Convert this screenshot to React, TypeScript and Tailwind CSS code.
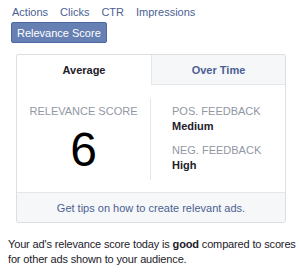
export default function App() {
  return (
    <div className="w-[300px] h-[276px] bg-white text-[11px] leading-[14px] text-[#333]" style={{ fontFamily: '"Liberation Sans", Arial, sans-serif' }}>
      <div className="pt-[5px] pl-[12px] flex gap-[12px] text-[#4b5f93]">
        <span>Actions</span>
        <span>Clicks</span>
        <span>CTR</span>
        <span>Impressions</span>
      </div>
      <div className="pl-[11px] mt-[3px] flex">
        <div className="h-[21px] px-[5px] flex items-center rounded-[2px] bg-[#6680b3] border border-[#4e69a2] text-white text-[11px]">
          Relevance Score
        </div>
      </div>
      <div className="ml-[16px] mt-[11px] w-[270px] border border-[#dddfe2] rounded-[2px]">
        <div className="flex h-[30px]">
          <div className="w-[134px] flex items-center justify-center font-bold text-[#1d2129]">Average</div>
          <div className="flex-1 flex items-center justify-center font-bold text-[#4b5f93] bg-[#f6f7f9] border-l border-b border-[#e5e6e9]">Over Time</div>
        </div>
        <div className="flex h-[107px] pt-[13px]">
          <div className="w-[134px] flex flex-col items-center border-r border-[#e5e6e9] h-[82px]">
            <div className="text-[#9197a3] mt-[6px]">RELEVANCE SCORE</div>
            <div className="text-[48px] leading-[48px] text-black mt-[8px]">6</div>
          </div>
          <div className="pl-[21px] pt-[6px] flex flex-col">
            <div className="text-[#9197a3]">POS. FEEDBACK</div>
            <div className="font-bold text-[#1d2129] mt-[1px]">Medium</div>
            <div className="text-[#9197a3] mt-[10px]">NEG. FEEDBACK</div>
            <div className="font-bold text-[#1d2129] mt-[1px]">High</div>
          </div>
        </div>
        <div className="h-[30px] bg-[#f6f7f9] border-t border-[#e5e6e9] flex items-center justify-center text-[#4b5f93]">
          Get tips on how to create relevant ads.
        </div>
      </div>
      <div className="pl-[8px] mt-[14px] leading-[15px] text-[#1d2129] tracking-[-0.15px]">
        Your ad's relevance score today is <b>good</b> compared to scores for other ads shown to your audience.
      </div>
    </div>
  );
}
